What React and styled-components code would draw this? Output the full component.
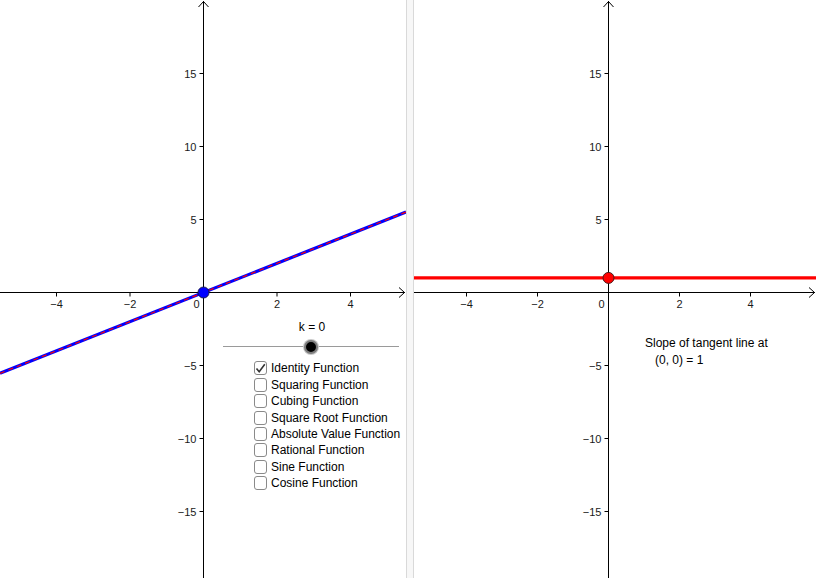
import React from 'react';
import styled, { createGlobalStyle } from 'styled-components';

const GlobalStyle = createGlobalStyle`
    html, body {
        margin: 0;
        padding: 0;
        background: #fff;
        overflow: hidden;
    }
    body {
        font-family: "Liberation Sans", Arial, sans-serif;
    }
`;

const Applet = styled.div`
    display: flex;
    width: 816px;
    height: 578px;
    background: #fff;
`;

const View = styled.div`
    position: relative;
    flex: 0 0 ${p => p.$width}px;
    height: 100%;
    overflow: hidden;
`;

const Divider = styled.div`
    flex: 0 0 6px;
    background: #f7f7f7;
    border-left: 1px solid #d9d9d9;
    border-right: 1px solid #d9d9d9;
`;

const SliderPanel = styled.div`
    position: absolute;
    left: 223px;
    top: 320px;
    width: 176px;
    display: flex;
    flex-direction: column;
    align-items: center;
`;

const SliderLabel = styled.div`
    font-size: 12px;
    color: #000;
    height: 15px;
    line-height: 15px;
    margin-left: 2px;
`;

const Track = styled.div`
    position: relative;
    width: 100%;
    height: 14px;
    margin-top: 5px;

    &::before {
        content: "";
        position: absolute;
        left: 0;
        right: 0;
        top: 6px;
        height: 1px;
        background: #9a9a9a;
    }
`;

const Knob = styled.div`
    position: absolute;
    left: ${p => p.$left}px;
    top: 0;
    width: 10px;
    height: 10px;
    border-radius: 50%;
    background: #000;
    border: 2px solid #7d7d7d;
    box-shadow: 0 0 0 1px #c8c8c8;
`;

const CheckList = styled.div`
    position: absolute;
    left: 254px;
    top: 360px;
    display: flex;
    flex-direction: column;
`;

const CheckRow = styled.label`
    display: flex;
    align-items: center;
    gap: 4px;
    height: 16.45px;
    font-size: 12px;
    color: #000;
    white-space: nowrap;
`;

const Box = styled.span`
    box-sizing: border-box;
    width: 13px;
    height: 14px;
    border: 1px solid #8a8a8a;
    border-radius: 3px;
    background: #fff;
    display: flex;
    align-items: center;
    justify-content: center;
`;

const SlopeText = styled.div`
    position: absolute;
    left: 231px;
    top: 335px;
    font-size: 12px;
    line-height: 17px;
    color: #000;
`;

const SlopeValue = styled.div`
    padding-left: 10px;
`;

const Check = ({ checked, label }) => (
    <CheckRow>
        <Box>
            {checked && (
                <svg width="11" height="11" viewBox="0 0 11 11">
                    <path d="M1.5 5.5 L4.2 8.8 L9.8 1.2" fill="none" stroke="#333" strokeWidth="1.6" />
                </svg>
            )}
        </Box>
        {label}
    </CheckRow>
);

const fmt = n => (n < 0 ? '\u2212' + Math.abs(n) : String(n));

const Axes = ({ width, height, ox, oy, sx, sy }) => {
    const xs = [-4, -2, 2, 4];
    const ys = [-15, -10, -5, 5, 10, 15];
    return (
        <g stroke="#000" strokeWidth="1" fill="none">
            <line x1="0" y1={oy} x2={width - 1} y2={oy} />
            <polyline points={`${width - 7},${oy - 5} ${width - 1.5},${oy} ${width - 7},${oy + 5}`} />
            <line x1={ox} y1={height} x2={ox} y2="1" />
            <polyline points={`${ox - 5},7 ${ox},1.5 ${ox + 5},7`} />
            {xs.map(v => (
                <line key={'x' + v} x1={ox + v * sx} y1={oy} x2={ox + v * sx} y2={oy + 4} />
            ))}
            {ys.map(v => (
                <line key={'y' + v} x1={ox - 4} y1={oy - v * sy} x2={ox} y2={oy - v * sy} />
            ))}
            <g stroke="none" fill="#1a1a1a" fontSize="11" fontFamily='"Liberation Sans", Arial, sans-serif'>
                {xs.map(v => (
                    <text key={'xl' + v} x={ox + v * sx} y={oy + 15} textAnchor="middle">{fmt(v)}</text>
                ))}
                <text x={ox - 4} y={oy + 15} textAnchor="end">0</text>
                {ys.map(v => (
                    <text key={'yl' + v} x={ox - 7} y={oy - v * sy + 4} textAnchor="end">{fmt(v)}</text>
                ))}
            </g>
        </g>
    );
};

const LEFT = { width: 406, height: 578, ox: 203.5, oy: 292.5, sx: 36.75, sy: 14.6 };
const RIGHT = { width: 402, height: 578, ox: 194.5, oy: 292.5, sx: 35.5, sy: 14.6 };

const functions = [
    'Identity Function',
    'Squaring Function',
    'Cubing Function',
    'Square Root Function',
    'Absolute Value Function',
    'Rational Function',
    'Sine Function',
    'Cosine Function',
];

const LeftGraph = () => {
    const { width, ox, oy, sx, sy } = LEFT;
    const yAt = px => oy - ((px - ox) / sx) * sy;
    return (
        <svg width={width} height={LEFT.height} style={{ display: 'block' }}>
            <Axes {...LEFT} />
            <line x1="0" y1={yAt(0)} x2={width} y2={yAt(width)} stroke="#0000ff" strokeWidth="3.2" />
            <line x1="0" y1={yAt(0)} x2={width} y2={yAt(width)} stroke="#ff0000" strokeWidth="1.2" strokeDasharray="5 4" />
            <circle cx={ox} cy={oy} r="5.5" fill="#0000ff" stroke="#1a1a4a" strokeWidth="1" />
        </svg>
    );
};

const RightGraph = () => {
    const { width, ox, oy, sy } = RIGHT;
    const y1 = oy - 1 * sy;
    return (
        <svg width={width} height={RIGHT.height} style={{ display: 'block' }}>
            <Axes {...RIGHT} />
            <line x1="0" y1={y1} x2={width} y2={y1} stroke="#ff0000" strokeWidth="3.4" />
            <circle cx={ox} cy={y1} r="5.5" fill="#ff0000" stroke="#4a1a1a" strokeWidth="1" />
        </svg>
    );
};

const App = () => (
    <>
        <GlobalStyle />
        <Applet>
            <View $width={LEFT.width}>
                <LeftGraph />
                <SliderPanel>
                    <SliderLabel>k = 0</SliderLabel>
                    <Track>
                        <Knob $left={81} />
                    </Track>
                </SliderPanel>
                <CheckList>
                    {functions.map((f, i) => (
                        <Check key={f} label={f} checked={i === 0} />
                    ))}
                </CheckList>
            </View>
            <Divider />
            <View $width={RIGHT.width}>
                <RightGraph />
                <SlopeText>
                    Slope of tangent line at
                    <SlopeValue>(0, 0) = 1</SlopeValue>
                </SlopeText>
            </View>
        </Applet>
    </>
);

export default App;
